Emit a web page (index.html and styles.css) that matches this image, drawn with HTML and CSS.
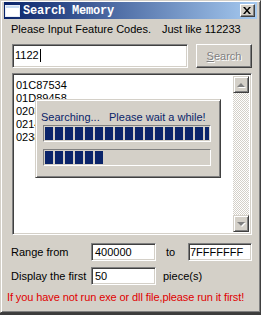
FILE: index.html
```
<!DOCTYPE html>
<html>
<head>
<meta charset="utf-8">
<link rel="stylesheet" href="styles.css">
</head>
<body>
<div class="window">
  <div class="titlebar">
    <span class="app-icon"></span>
    <span class="title">Search Memory</span>
    <span class="close"><svg width="8" height="7" viewBox="0 0 8 7"><path d="M0 0h2l2 2.5L6 0h2L5 3.5 8 7H6L4 4.5 2 7H0l3-3.5z" fill="#000"/></svg></span>
  </div>
  <div class="content">
    <div class="hint"><span class="hint-main">Please Input Feature Codes.</span><span>Just like 112233</span></div>
    <div class="search-row">
      <div class="field code-field">1122<span class="caret"></span></div>
      <div class="btn disabled"><span class="ul">S</span>earch</div>
    </div>
    <div class="listbox">
      <div class="items">
        <div class="item">01C87534</div>
        <div class="item">01D89458</div>
        <div class="item">0203A1C8</div>
        <div class="item">0214B7F0</div>
        <div class="item">0238C2D4</div>
      </div>
      <div class="scrollbar">
        <div class="sb-btn"><span class="arrow up"></span></div>
        <div class="track"></div>
        <div class="sb-btn"><span class="arrow down"></span></div>
      </div>
      <div class="progress-dialog">
        <div class="status"><span class="s1">Searching...</span><span>Please wait a while!</span></div>
        <div class="bar"><div class="fill" style="width:100%"></div></div>
        <div class="bar"><div class="fill" style="width:58px"></div></div>
      </div>
    </div>
    <div class="form-row">
      <span class="lbl">Range from</span>
      <div class="field small">400000</div>
      <span class="to">to</span>
      <div class="field small end">7FFFFFFF</div>
    </div>
    <div class="form-row second">
      <span class="lbl">Display the first</span>
      <div class="field small">50</div>
      <span class="pieces">piece(s)</span>
    </div>
    <p class="warning">If you have not run exe or dll file,please run it first!</p>
  </div>
</div>
</body>
</html>
```
FILE: styles.css
```
html, body {
  margin: 0;
  padding: 0;
}
body {
  width: 261px;
  height: 315px;
  overflow: hidden;
  background: #3c3c3c;
  font-family: "Liberation Sans", Arial, sans-serif;
  font-size: 11px;
  color: #000;
}
.window {
  box-sizing: border-box;
  width: 261px;
  height: 313px;
  background: #d4d0c8;
  border-style: solid;
  border-width: 1px 1px 1px 1px;
  border-color: #d4d0c8 #404040 #404040 #d4d0c8;
  box-shadow: inset 1px 1px #fff, inset -1px -1px #808080;
  padding: 1px 3px 0 3px;
  display: flex;
  flex-direction: column;
}
.titlebar {
  height: 17px;
  display: flex;
  align-items: center;
  background: linear-gradient(to right, #0a246a, #a6caf0);
  padding: 0 2px 0 1px;
}
.app-icon {
  width: 15px;
  height: 12px;
  background: linear-gradient(to bottom, #c8dcf4 0 3px, #fff 3px);
  box-shadow: inset 0 0 0 1px #e8eef8;
}
.title {
  margin-left: 3px;
  color: #fff;
  font-family: "Liberation Mono", "DejaVu Sans Mono", monospace;
  font-weight: bold;
  font-size: 12px;
  letter-spacing: -0.2px;
}
.close {
  margin-left: auto;
  box-sizing: border-box;
  width: 15px;
  height: 13px;
  background: #d4d0c8;
  border: 1px solid;
  border-color: #fff #404040 #404040 #fff;
  box-shadow: inset -1px -1px #808080;
  display: flex;
  align-items: center;
  justify-content: center;
  padding-right: 1px;
}
.content {
  padding: 0 5px 0 7px;
  display: flex;
  flex-direction: column;
}
.hint {
  margin-top: 4px;
  line-height: 13px;
  display: flex;
}
.hint-main {
  width: 151px;
}
.search-row {
  margin-top: 8px;
  display: flex;
  padding-left: 1px;
}
.field {
  box-sizing: border-box;
  background: #fff;
  border: 1px solid;
  border-color: #808080 #fff #fff #808080;
  box-shadow: inset 1px 1px #404040, inset -1px -1px #d4d0c8;
  display: flex;
  align-items: center;
  white-space: nowrap;
}
.code-field {
  width: 176px;
  height: 24px;
  padding: 0 0 2px 2px;
}
.caret {
  width: 1px;
  height: 13px;
  background: #000;
  margin-left: 1px;
}
.btn {
  box-sizing: border-box;
  margin-left: 8px;
  width: 56px;
  height: 24px;
  border: 1px solid;
  border-color: #fff #404040 #404040 #fff;
  box-shadow: inset -1px -1px #808080;
  display: flex;
  align-items: center;
  justify-content: center;
}
.btn.disabled {
  color: #808080;
  text-shadow: 1px 1px #fff;
}
.ul {
  text-decoration: underline;
}
.listbox {
  position: relative;
  box-sizing: border-box;
  margin-top: 5px;
  margin-left: 1px;
  width: 240px;
  height: 162px;
  background: #fff;
  border: 1px solid;
  border-color: #808080 #fff #fff #808080;
  box-shadow: inset 1px 1px #404040, inset -1px -1px #d4d0c8;
  padding: 2px;
  display: flex;
}
.items {
  flex: 1;
  padding: 3px 0 0 1px;
}
.item {
  line-height: 13px;
}
.scrollbar {
  width: 16px;
  display: flex;
  flex-direction: column;
}
.sb-btn {
  box-sizing: border-box;
  height: 17px;
  background: #d4d0c8;
  border: 1px solid;
  border-color: #d4d0c8 #404040 #404040 #d4d0c8;
  box-shadow: inset 1px 1px #fff, inset -1px -1px #808080;
  display: flex;
  align-items: center;
  justify-content: center;
}
.arrow {
  width: 0;
  height: 0;
  border-left: 4px solid transparent;
  border-right: 4px solid transparent;
}
.arrow.up {
  border-bottom: 4px solid #808080;
  filter: drop-shadow(1px 1px #fff);
}
.arrow.down {
  border-top: 4px solid #808080;
  filter: drop-shadow(1px 1px #fff);
}
.track {
  flex: 1;
  background: repeating-conic-gradient(#fff 0 25%, #d4d0c8 0 50%) 0 0 / 2px 2px;
}
.progress-dialog {
  position: absolute;
  left: 22px;
  top: 25px;
  box-sizing: border-box;
  width: 186px;
  height: 79px;
  background: #d4d0c8;
  border: 1px solid;
  border-color: #d4d0c8 #404040 #404040 #d4d0c8;
  box-shadow: inset 1px 1px #fff, inset -1px -1px #808080;
  padding: 11px 0 0 5px;
}
.status {
  color: #0a246a;
  line-height: 13px;
  display: flex;
}
.s1 {
  width: 68px;
}
.bar {
  box-sizing: border-box;
  margin: 0 0 0 2px;
  width: 168px;
  height: 17px;
  border: 1px solid;
  border-color: #808080 #fff #fff #808080;
  padding: 1px;
  overflow: hidden;
}
.status + .bar {
  margin-top: 1px;
}
.bar + .bar {
  margin-top: 7px;
}
.fill {
  height: 13px;
  background: repeating-linear-gradient(to right, #0a246a 0 8px, transparent 8px 10px);
}
.form-row {
  margin-top: 8px;
  display: flex;
  align-items: center;
  height: 18px;
}
.form-row.second {
  margin-top: 6px;
}
.lbl {
  width: 80px;
}
.field.small {
  width: 65px;
  height: 18px;
  padding-left: 3px;
}
.field.small.end {
  width: 64px;
  padding-left: 1px;
}
.to {
  margin-left: 10px;
  width: 22px;
}
.pieces {
  margin-left: 7px;
}
.warning {
  margin: 6px 0 0 -4px;
  line-height: 13px;
  color: #e00000;
  white-space: nowrap;
  letter-spacing: -0.1px;
}
```
